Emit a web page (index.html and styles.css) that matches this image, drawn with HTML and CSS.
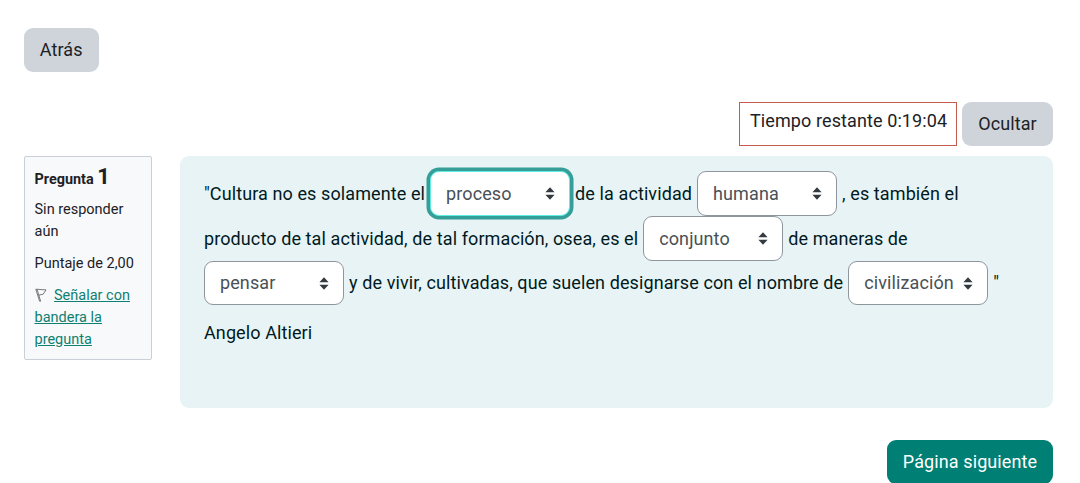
FILE: index.html
```html
<!DOCTYPE html>
<html lang="es">
<head>
<meta charset="utf-8">
<title>Cuestionario</title>
<link rel="stylesheet" href="styles.css">
</head>
<body>
<svg class="defs" width="0" height="0"><symbol id="sort" viewBox="0 0 10 13"><path d="M5 0.3L9.6 5.2H0.4ZM5 12.7L9.6 7.8H0.4Z"/></symbol></svg>
<main class="page">
  <button class="btn back">Atrás</button>
  <div class="timer-row">
    <div class="timer">Tiempo restante 0:19:04</div>
    <button class="btn hide">Ocultar</button>
  </div>
  <div class="question">
    <aside class="info">
      <h3 class="number">Pregunta <span class="qno">1</span></h3>
      <div class="state">Sin responder<br>aún</div>
      <div class="grade">Puntaje de 2,00</div>
      <div class="flag"><svg class="flag-icon" viewBox="0 0 12 14"><path d="M.8 1.2L4.6 13.2H5.6L2.1 1.4M.8 1.2L11 1.9L8.2 6.2L3.6 7.2" /></svg><a>Señalar con<br>bandera la<br>pregunta</a></div>
    </aside>
    <section class="content">
      <div class="line"><span>"Cultura no es solamente el</span><span class="select focus"><span>proceso</span><svg class="sort"><use href="#sort"/></svg></span><span>de la actividad</span><span class="select"><span>humana</span><svg class="sort"><use href="#sort"/></svg></span><span>, es también el</span></div>
      <div class="line"><span>producto de tal actividad, de tal formación, osea, es el</span><span class="select"><span>conjunto</span><svg class="sort"><use href="#sort"/></svg></span><span>de maneras de</span></div>
      <div class="line last"><span class="select"><span>pensar</span><svg class="sort"><use href="#sort"/></svg></span><span>y de vivir, cultivadas, que suelen designarse con el nombre de</span><span class="select"><span>civilización</span><svg class="sort"><use href="#sort"/></svg></span><span>"</span></div>
      <p class="author">Angelo Altieri</p>
    </section>
  </div>
  <div class="nav"><button class="btn next">Página siguiente</button></div>
</main>
</body>
</html>
```
FILE: styles.css
```css
* { box-sizing: border-box; }
body { margin: 0; background: #fff; color: #1d2125; font: 18px/28px Roboto, sans-serif; letter-spacing: .1px; overflow: hidden; }
.defs { display: block; height: 0; }
.page { padding: 28px 27px 0 24px; height: 483px; overflow: hidden; }
.btn { display: block; height: 44px; padding: 0; border: 0; border-radius: 9px; background: #ced4da; color: #1d2125; font: inherit; letter-spacing: inherit; white-space: nowrap; }
.back { width: 74.5px; }
.timer-row { display: flex; justify-content: flex-end; gap: 5px; margin-top: 30px; }
.timer { width: 218px; height: 44px; padding: 4px 0 0 10px; border: 1px solid #c45b50; white-space: nowrap; }
.hide { width: 91px; }
.question { display: flex; align-items: flex-start; justify-content: space-between; margin-top: 10px; }
.info { width: 128px; height: 204px; padding: 10px 0 0 9.5px; border: 1px solid #cad0d7; border-radius: 2px; background: #f8f9fa; font-size: 14.5px; line-height: 21.7px; letter-spacing: 0; white-space: nowrap; }
.number { margin: 0; height: 24px; font-size: 14.4px; line-height: 24px; font-weight: 700; }
.qno { font-size: 22px; line-height: 20px; }
.state { margin-top: 8px; }
.grade { margin-top: 10.5px; }
.flag { margin-top: 10.5px; }
.flag-icon { width: 12px; height: 14px; margin-right: 7.5px; vertical-align: -2px; fill: none; stroke: #555b60; stroke-width: .8; }
.flag a { color: #0f7f72; text-decoration: underline; }
.content { width: 873px; height: 252px; padding: 15px 24px; border-radius: 9px; background: #e7f3f5; color: #001a1e; }
.line { display: flex; align-items: center; gap: 5px; height: 45px; white-space: nowrap; }
.last { height: 44px; }
.select { display: flex; flex: none; align-items: center; justify-content: space-between; width: 140px; height: 45px; padding: 0 14px 0 15px; border: 1px solid #8f959e; border-radius: 9px; background: #fff; color: #495057; }
.last .select { height: 44px; }
.sort { width: 10px; height: 13px; fill: #343a40; }
.focus { border-color: #5eeee4; box-shadow: 0 0 0 3.5px #359e98; }
.author { margin: 14px 0 0; }
.nav { display: flex; justify-content: flex-end; margin-top: 32px; }
.next { width: 166px; background: #008074; color: #fff; }
```
